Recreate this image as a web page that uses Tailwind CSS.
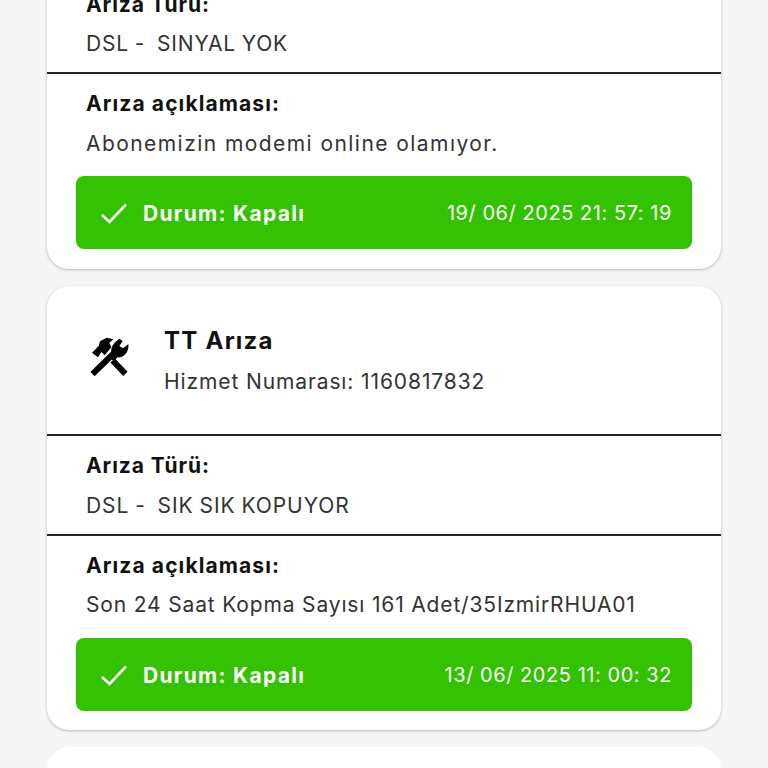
<!doctype html>
<html>

<head>
  <meta charset="UTF-8">
  <meta name="viewport" content="width=device-width, initial-scale=1.0">
  <script src="https://cdn.jsdelivr.net/npm/@tailwindcss/browser@4"></script>
</head>

<body class="bg-[#f5f5f5] font-['Inter',sans-serif] overflow-hidden">
  <div class="h-[768px] overflow-hidden">
    <div class="flex flex-col gap-[17px] px-[47px] mt-[-24px]">

      <!-- first card, scrolled off the top -->
      <div class="bg-white rounded-b-[22px] shadow-[0_1px_3px_rgba(0,0,0,0.25)]">
        <div class="h-[96px] pl-[39px] pt-[17px]">
          <p class="text-[21px] leading-[24px] font-bold text-[#111] tracking-[0.9px]">Arıza Türü:</p>
          <p class="mt-[15px] text-[21px] leading-[24px] text-[#333] tracking-[0.8px] [word-spacing:-0.8px] whitespace-pre">DSL -  SINYAL YOK</p>
        </div>
        <div class="border-t-2 border-[#222] h-[104px] pl-[39px] pt-[18px]">
          <p class="text-[21px] leading-[24px] font-bold text-[#111] tracking-[1.1px]">Arıza açıklaması:</p>
          <p class="mt-[16px] text-[21px] leading-[24px] text-[#333] tracking-[1.44px]">Abonemizin modemi online olamıyor.</p>
        </div>
        <div class="px-[29px] pb-[20px]">
          <div class="h-[73px] bg-[#32c200] rounded-[8px] flex items-center justify-between pl-[23px] pr-[20px] text-white">
            <div class="flex items-center gap-[15px]">
              <svg class="w-[29px] h-[24px]" viewBox="0 0 29 24" fill="none" stroke="white" stroke-width="2.6">
                <path d="M3 14 L10.5 21 L27 3.5" />
              </svg>
              <span class="pt-[2px] text-[21px] font-bold tracking-[1.3px]">Durum: Kapalı</span>
            </div>
            <span class="pt-[1px] text-[20px] tracking-[0.55px]">19/ 06/ 2025 21: 57: 19</span>
          </div>
        </div>
      </div>

      <!-- second card -->
      <div class="bg-white rounded-[22px] shadow-[0_1px_3px_rgba(0,0,0,0.25)]">
        <div class="h-[148px] flex items-start pl-[37px] pt-[40px]">
          <svg class="w-[50px] h-[50px] mt-[6px]" viewBox="0 0 150 150">
            <path d="M32 120 L85 68" stroke="#000" stroke-width="18" stroke-linecap="square" fill="none" />
            <path d="M92 92 L118 119" stroke="#000" stroke-width="18" stroke-linecap="square" fill="none" />
            <path d="M24 62 L44 42 L48 28 L68 17 L88 22 L76 32 L82 46 L62 70 L52 60 L42 76 Z" fill="#000" />
            <path d="M106 20 L94 30 C86 38 80 50 82 62 L72 72 L90 88 L100 76 C118 78 136 62 133 36 L117 49 L106 42 L116 27 Z" fill="#000" />
          </svg>
          <div class="ml-[30px]">
            <p class="text-[24px] leading-[30px] font-bold text-[#111] tracking-[1.25px]">TT Arıza</p>
            <p class="mt-[11px] text-[21px] leading-[30px] text-[#333] tracking-[0.89px]">Hizmet Numarası: 1160817832</p>
          </div>
        </div>
        <div class="border-t-2 border-[#222] h-[100px] pl-[39px] pt-[18px]">
          <p class="text-[21px] leading-[24px] font-bold text-[#111] tracking-[0.9px]">Arıza Türü:</p>
          <p class="mt-[16px] text-[21px] leading-[24px] text-[#333] tracking-[0.95px] [word-spacing:-1px] whitespace-pre">DSL -  SIK SIK KOPUYOR</p>
        </div>
        <div class="border-t-2 border-[#222] h-[104px] pl-[39px] pt-[18px]">
          <p class="text-[21px] leading-[24px] font-bold text-[#111] tracking-[1.1px]">Arıza açıklaması:</p>
          <p class="mt-[15px] text-[21px] leading-[24px] text-[#333] tracking-[0.84px]">Son 24 Saat Kopma Sayısı 161 Adet/35IzmirRHUA01</p>
        </div>
        <div class="px-[29px] pb-[19px]">
          <div class="h-[73px] bg-[#32c200] rounded-[8px] flex items-center justify-between pl-[23px] pr-[20px] text-white">
            <div class="flex items-center gap-[15px]">
              <svg class="w-[29px] h-[24px]" viewBox="0 0 29 24" fill="none" stroke="white" stroke-width="2.6">
                <path d="M3 14 L10.5 21 L27 3.5" />
              </svg>
              <span class="pt-[2px] text-[21px] font-bold tracking-[1.3px]">Durum: Kapalı</span>
            </div>
            <span class="pt-[1px] text-[20px] tracking-[0.55px]">13/ 06/ 2025 11: 00: 32</span>
          </div>
        </div>
      </div>

      <!-- next card, only its top shows -->
      <div class="bg-white rounded-t-[22px] h-[100px]"></div>
    </div>
  </div>
</body>

</html>
